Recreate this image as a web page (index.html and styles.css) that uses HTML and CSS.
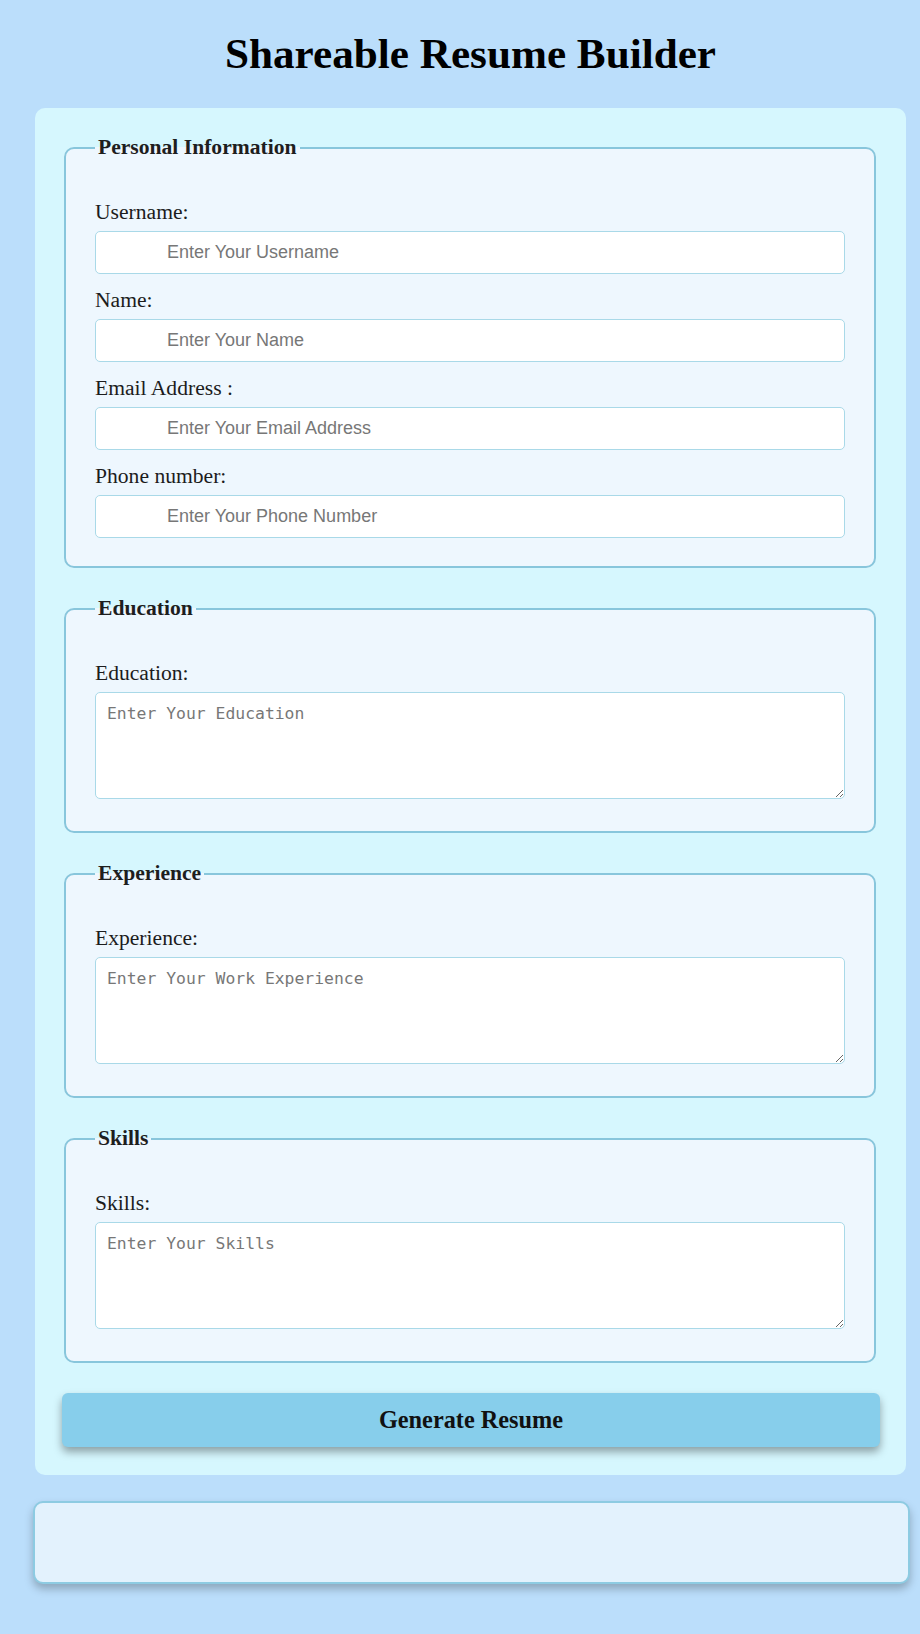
FILE: index.html
```html
<!DOCTYPE html>
<html lang="en">
<head>
<meta charset="utf-8">
<title>Shareable Resume Builder</title>
<link rel="stylesheet" href="styles.css">
</head>
<body>
<div class="page">
  <h1 class="title">Shareable Resume Builder</h1>
  <form class="builder">
    <fieldset class="section">
      <legend class="section-title">Personal Information</legend>
      <label class="field-label" for="username">Username:</label>
      <input class="field-input" id="username" type="text" placeholder="Enter Your Username">
      <label class="field-label" for="name">Name:</label>
      <input class="field-input" id="name" type="text" placeholder="Enter Your Name">
      <label class="field-label" for="email">Email Address :</label>
      <input class="field-input" id="email" type="email" placeholder="Enter Your Email Address">
      <label class="field-label" for="phone">Phone number:</label>
      <input class="field-input" id="phone" type="tel" placeholder="Enter Your Phone Number">
    </fieldset>
    <fieldset class="section">
      <legend class="section-title">Education</legend>
      <label class="field-label" for="education">Education:</label>
      <textarea class="field-area" id="education" placeholder="Enter Your Education"></textarea>
    </fieldset>
    <fieldset class="section">
      <legend class="section-title">Experience</legend>
      <label class="field-label" for="experience">Experience:</label>
      <textarea class="field-area" id="experience" placeholder="Enter Your Work Experience"></textarea>
    </fieldset>
    <fieldset class="section">
      <legend class="section-title">Skills</legend>
      <label class="field-label" for="skills">Skills:</label>
      <textarea class="field-area" id="skills" placeholder="Enter Your Skills"></textarea>
    </fieldset>
    <button class="generate" type="button">Generate Resume</button>
  </form>
  <div class="output"></div>
</div>
</body>
</html>
```
FILE: styles.css
```css
* { box-sizing: border-box; }

body {
  margin: 0;
  background: #bbdefb;
  font-family: "Liberation Serif", "Times New Roman", serif;
  color: #1c1c1c;
}

.page {
  padding: 29px 14px 40px 35px;
}

.title {
  margin: 0 0 29px;
  font-size: 43.2px;
  line-height: 50px;
  font-weight: bold;
  text-align: center;
  color: #000;
}

.builder {
  background: #d6f7fe;
  border-radius: 10px;
  padding: 27px 30px 28px 29px;
}

.section {
  margin: 0 0 28px;
  padding: 40px 29px 14px 29px;
  border: 2px solid #88c6dc;
  border-radius: 10px;
  background: #eef7fe;
  min-width: 0;
}

.section-title {
  padding: 0 3px;
  font-size: 21.6px;
  line-height: 25px;
  font-weight: bold;
  color: #1e1e1e;
}

.field-label {
  display: block;
  font-size: 21.6px;
  line-height: 25px;
  margin-bottom: 6px;
  color: #1c1c1c;
}

.field-input {
  display: block;
  width: 100%;
  height: 43px;
  margin: 0 0 14px;
  padding: 0 10px 0 71px;
  border: 1px solid #a9d9e8;
  border-radius: 5px;
  background: #fff;
  font-family: "Liberation Sans", Arial, sans-serif;
  font-size: 18px;
  color: #222;
}

.field-input::placeholder {
  color: #777;
}

.field-area {
  display: block;
  width: 100%;
  height: 107px;
  margin: 0 0 18px;
  padding: 11px 11px;
  border: 1px solid #a9d9e8;
  border-radius: 5px;
  background: #fff;
  font-family: "DejaVu Sans Mono", "Liberation Mono", monospace;
  font-size: 16.4px;
  line-height: 19px;
  color: #222;
  resize: vertical;
}

.field-area::placeholder {
  color: #777;
}

.generate {
  display: block;
  width: calc(100% + 6px);
  height: 54px;
  margin: 30px -4px 0 -2px;
  border: none;
  border-radius: 6px;
  background: #87ceeb;
  box-shadow: 0 5px 8px rgba(0, 0, 0, 0.35);
  font-family: "Liberation Serif", "Times New Roman", serif;
  font-size: 24.3px;
  font-weight: bold;
  color: #111;
}

.builder .section:last-of-type {
  margin-bottom: 0;
}

.output {
  height: 83px;
  margin: 26px -4px 0 -2px;
  border: 2px solid #8dcbe2;
  border-radius: 10px;
  background: #e3f2fd;
  box-shadow: 0 5px 8px rgba(0, 0, 0, 0.25);
}
```
